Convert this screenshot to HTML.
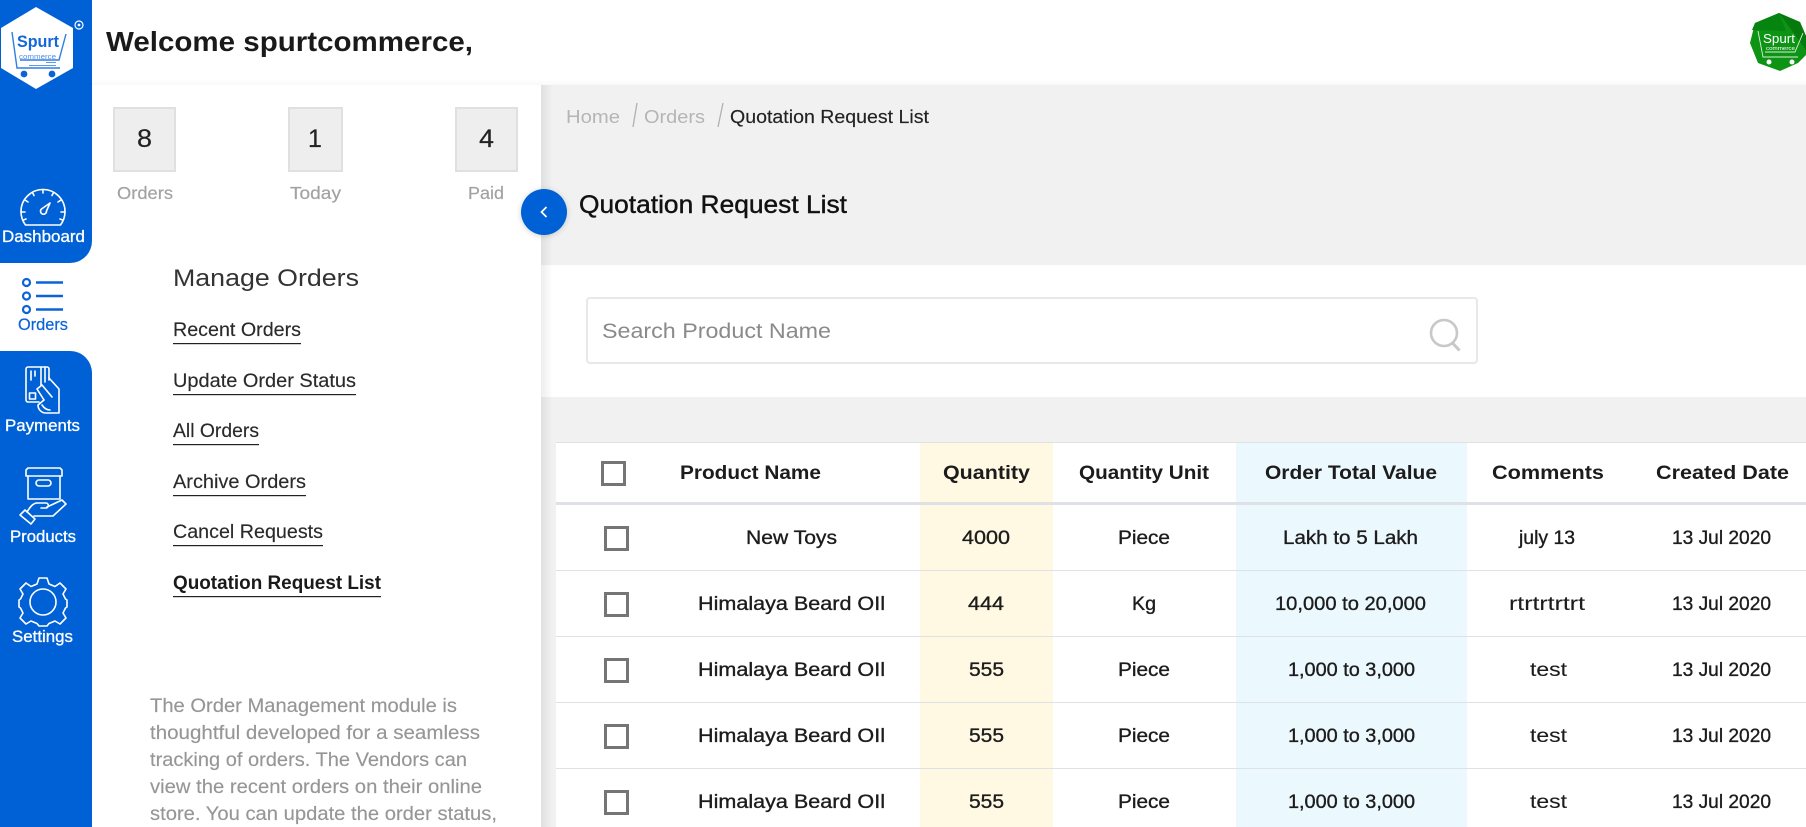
<!DOCTYPE html>
<html lang="en"><head><meta charset="utf-8"><title>Quotation Request List</title>
<style>
html,body{margin:0;padding:0;background:#fff;width:1806px;height:827px;overflow:hidden}
svg{display:block}
text{font-family:"Liberation Sans",sans-serif}
.c{fill:#1c1c1c;stroke:#1c1c1c;stroke-width:.35px;font-size:19.500px}
.h{fill:#1c1c1c;font-size:19.500px;font-weight:700}
.l{fill:#2a2a2a;font-size:19.500px;stroke:#2a2a2a;stroke-width:.15px}
.p{fill:#969696;font-size:19.500px;stroke:#969696;stroke-width:.15px}
.n{fill:#fff;font-size:16.500px;stroke:#fff;stroke-width:.3px}
.g{fill:#a2a2a2;font-size:17.500px;stroke:#a2a2a2;stroke-width:.2px}
.ic{fill:none;stroke:#fff;stroke-width:1.6;stroke-linecap:round;stroke-linejoin:round}
.cb{fill:none;stroke:#757575;stroke-width:3}
</style></head><body>
<svg width="1806" height="827" viewBox="0 0 1806 827" xmlns="http://www.w3.org/2000/svg">
<defs>
<linearGradient id="sh" x1="0" x2="1" y1="0" y2="0"><stop offset="0" stop-color="#000" stop-opacity=".07"/><stop offset="1" stop-color="#000" stop-opacity="0"/></linearGradient>
<linearGradient id="shv" x1="0" x2="0" y1="0" y2="1"><stop offset="0" stop-color="#000" stop-opacity="0"/><stop offset="1" stop-color="#000" stop-opacity=".025"/></linearGradient>
<filter id="ts" x="-30%" y="-30%" width="160%" height="160%"><feDropShadow dx="0" dy="1" stdDeviation="3" flood-color="#000" flood-opacity=".18"/></filter>
</defs>

<!-- backgrounds -->
<rect x="0" y="0" width="1806" height="827" fill="#fff"/>
<rect x="541" y="85" width="1265" height="742" fill="#f1f1f1"/>
<rect x="541" y="265" width="1265" height="132" fill="#fff"/>

<!-- header -->
<rect x="92" y="79" width="1714" height="6" fill="url(#shv)"/>
<text x="106" y="51" font-size="28" font-weight="700" fill="#1a1a1a" textLength="367" lengthAdjust="spacingAndGlyphs">Welcome spurtcommerce,</text>

<!-- avatar -->
<g>
<polygon points="1779,13 1800,22 1806,36 1806,55 1798,63 1780,71 1758,63 1750,43 1755,23" fill="#0d9415"/>
<polygon points="1779,13 1800,22 1806,36 1806,50" fill="#067a0c"/>
<polygon points="1755,23 1779,13 1786,31 1752,30" fill="#068410"/>
<text x="1763" y="43" font-size="12.500" fill="#fff" textLength="32" lengthAdjust="spacingAndGlyphs">Spurt</text>
<text x="1766" y="50" font-size="5" fill="#fff" textLength="29" lengthAdjust="spacingAndGlyphs">commerce</text>
<path d="M1758 31L1763 57H1798M1803 33L1795 52H1765" fill="none" stroke="#d8efd8" stroke-width=".9"/>
<circle cx="1769" cy="62" r="2.500" fill="#fff"/><circle cx="1792" cy="62" r="2.500" fill="#fff"/>
</g>

<!-- sidebar -->
<path d="M0 0H92V241a22 22 0 0 1-22 22H0Z" fill="#0061d6"/>
<path d="M0 351H70a22 22 0 0 1 22 22V827H0Z" fill="#0061d6"/>

<!-- logo -->
<polygon points="36,7 73,28 73,68 36,89 1,68 1,28" fill="#fff"/>
<circle cx="79" cy="25" r="4" fill="none" stroke="#fff" stroke-width="1.200"/><circle cx="79" cy="25" r="1.400" fill="#fff"/>
<path d="M12 32l5 36h43M66 34l-7 26H20" fill="none" stroke="#2f7fe2" stroke-width="1.400"/>
<text x="17" y="47" font-size="17" font-weight="700" fill="#1467d8" textLength="42" lengthAdjust="spacingAndGlyphs">Spurt</text>
<text x="19" y="59" font-size="7.500" fill="#4f8ee4" textLength="37" lengthAdjust="spacingAndGlyphs">commerce</text>
<path d="M29 65.500H56M46 62.500H56" stroke="#5f9ae9" stroke-width="1" fill="none"/>
<circle cx="24" cy="74" r="3.400" fill="#0d62d6"/><circle cx="52" cy="74" r="3.400" fill="#0d62d6"/>

<!-- dashboard -->
<g class="ic">
<path d="M25.500 225C22.500 221 21 216.500 21 211.500a22 22 0 0 1 44 0C65 216.500 63.500 221 60.500 225Z"/>
<path d="M43 189.500v3.500M32.500 192.500l1.500 3M53.500 192.500l-1.500 3M25 200l3 2M61 200l-3 2M21 212h4M61 212h4M23.500 220l2.500-1M62.500 220l-2.500-1"/>
<path d="M50 203l-3.500 8a3 3 0 1 1-5-2Z"/>
</g>
<text class="n" x="2" y="242" textLength="83" lengthAdjust="spacingAndGlyphs">Dashboard</text>

<!-- orders -->
<g fill="none" stroke="#0a63d8">
<circle cx="26.500" cy="282.500" r="3.500" stroke-width="2.200"/><circle cx="26.500" cy="296" r="3.500" stroke-width="2.200"/><circle cx="26.500" cy="309.500" r="3.500" stroke-width="2.200"/>
<path d="M36 282.500H63M36 296H63M36 309.500H63" stroke-width="2.600"/>
</g>
<text x="18" y="330" font-size="16.500" fill="#0a63d8" stroke="#0a63d8" stroke-width=".2" textLength="50" lengthAdjust="spacingAndGlyphs">Orders</text>

<!-- payments -->
<g class="ic">
<path d="M39 402H28a2 2 0 0 1-2-2V369a2 2 0 0 1 2-2H47a2 2 0 0 1 2 2V380"/>
<path d="M41 367V385M45 367V382M31 371V380M35 371V376"/>
<rect x="29.500" y="393" width="6" height="6"/>
<path d="M49 378L59 389V413H46C41 413 38 409 38 405L44 400"/>
<path d="M52 397L42 385 37 389 44 400"/>
<path d="M42 405C44 408 47 410 50 410"/>
</g>
<text class="n" x="5" y="431" textLength="75" lengthAdjust="spacingAndGlyphs">Payments</text>

<!-- products -->
<g class="ic">
<path d="M28 468H60L62 470V476H26V470Z"/>
<path d="M28 476V499H60V476"/>
<rect x="36" y="480" width="15" height="6" rx="3"/>
<path d="M20 515L25 510 35 519 31 524Z"/>
<path d="M27 512C30 507 33 503 37 503H46C49 503 49 508 46 508H41M47 507L62 500 66 504 53 516H34"/>
</g>
<text class="n" x="10" y="542" textLength="66" lengthAdjust="spacingAndGlyphs">Products</text>

<!-- settings -->
<g class="ic">
<circle cx="43" cy="602" r="13"/>
<path d="M39 578H47L49 584 55 586.500 60 583 66 589 63 594 65.500 599 67 600V607L65.500 608 63 613 66 618 60 624 55 621 49 623.500 47 626H39L37 623.500 31 621 26 624 20 618 23 613 20.500 608 19 607V600L20.500 599 23 594 20 589 26 583 31 586.500 37 584Z"/>
</g>
<text class="n" x="12" y="642" textLength="61" lengthAdjust="spacingAndGlyphs">Settings</text>

<!-- panel shadow -->
<rect x="541" y="85" width="12" height="742" fill="url(#sh)"/>

<!-- stats -->
<g fill="#eeeeee" stroke="#e0e0e0" stroke-width="2">
<rect x="114" y="108" width="61" height="63"/>
<rect x="289" y="108" width="53" height="63"/>
<rect x="456" y="108" width="61" height="63"/>
</g>
<g font-size="25" fill="#222" stroke="#222" stroke-width=".2">
<text x="137" y="147" textLength="15" lengthAdjust="spacingAndGlyphs">8</text>
<text x="308" y="147">1</text>
<text x="479" y="147" textLength="15" lengthAdjust="spacingAndGlyphs">4</text>
</g>
<text class="g" x="117" y="199" textLength="56" lengthAdjust="spacingAndGlyphs">Orders</text>
<text class="g" x="290" y="199" textLength="51" lengthAdjust="spacingAndGlyphs">Today</text>
<text class="g" x="468" y="199" textLength="36" lengthAdjust="spacingAndGlyphs">Paid</text>

<!-- menu -->
<text x="173" y="286" font-size="24.500" fill="#333" textLength="186" lengthAdjust="spacingAndGlyphs">Manage Orders</text>
<text class="l" x="173" y="336" textLength="128" lengthAdjust="spacingAndGlyphs">Recent Orders</text>
<rect x="173" y="343" width="128" height="1.200" fill="#222"/>
<text class="l" x="173" y="387" textLength="183" lengthAdjust="spacingAndGlyphs">Update Order Status</text>
<rect x="173" y="394" width="183" height="1.200" fill="#222"/>
<text class="l" x="173" y="437" textLength="86" lengthAdjust="spacingAndGlyphs">All Orders</text>
<rect x="173" y="444" width="86" height="1.200" fill="#222"/>
<text class="l" x="173" y="488" textLength="133" lengthAdjust="spacingAndGlyphs">Archive Orders</text>
<rect x="173" y="495" width="133" height="1.200" fill="#222"/>
<text class="l" x="173" y="538" textLength="150" lengthAdjust="spacingAndGlyphs">Cancel Requests</text>
<rect x="173" y="545" width="150" height="1.200" fill="#222"/>
<text x="173" y="589" font-size="19.500" font-weight="700" fill="#1a1a1a" textLength="208" lengthAdjust="spacingAndGlyphs">Quotation Request List</text>
<rect x="173" y="596" width="208" height="1.200" fill="#222"/>

<!-- description -->
<text class="p" x="150" y="712" textLength="307" lengthAdjust="spacingAndGlyphs">The Order Management module is</text>
<text class="p" x="150" y="739" textLength="330" lengthAdjust="spacingAndGlyphs">thoughtful developed for a seamless</text>
<text class="p" x="150" y="766" textLength="317" lengthAdjust="spacingAndGlyphs">tracking of orders. The Vendors can</text>
<text class="p" x="150" y="793" textLength="332" lengthAdjust="spacingAndGlyphs">view the recent orders on their online</text>
<text class="p" x="150" y="820" textLength="347" lengthAdjust="spacingAndGlyphs">store. You can update the order status,</text>

<!-- toggle -->
<circle cx="544" cy="212" r="23" fill="#0061d6" filter="url(#ts)"/>
<path d="M546.500 207L541.500 212 546.500 217" fill="none" stroke="#fff" stroke-width="1.700"/>

<!-- breadcrumb -->
<text x="566" y="123" font-size="18.500" fill="#b5b5b5" textLength="54" lengthAdjust="spacingAndGlyphs">Home</text>
<path d="M637 103L633 127M723 103L718 127" stroke="#b0b0b0" stroke-width="1.300" fill="none"/>
<text x="644" y="123" font-size="18.500" fill="#b5b5b5" textLength="61" lengthAdjust="spacingAndGlyphs">Orders</text>
<text x="730" y="123" font-size="18.500" fill="#222" stroke="#222" stroke-width=".15" textLength="199" lengthAdjust="spacingAndGlyphs">Quotation Request List</text>
<text x="579" y="213" font-size="25" fill="#111" stroke="#111" stroke-width=".4" textLength="268" lengthAdjust="spacingAndGlyphs">Quotation Request List</text>

<!-- search -->
<rect x="587" y="298" width="890" height="65" rx="3" fill="#fff" stroke="#e8e8e8" stroke-width="2"/>
<text x="602" y="338" font-size="21" fill="#8a8a8a" textLength="229" lengthAdjust="spacingAndGlyphs">Search Product Name</text>
<circle cx="1444" cy="333" r="13" fill="none" stroke="#c8c8c8" stroke-width="2.600"/>
<path d="M1452.500 343L1459.500 350.500" stroke="#c8c8c8" stroke-width="3" fill="none"/>

<!-- table -->
<rect x="556" y="442" width="1250" height="385" fill="#fff"/>
<rect x="920" y="442" width="133" height="385" fill="#fff8e3"/>
<rect x="1236" y="442" width="231" height="385" fill="#ebf8fe"/>
<rect x="556" y="442" width="1250" height="1" fill="#dee2e6"/>
<rect x="556" y="502" width="1250" height="3" fill="#dee2e6"/>
<rect x="556" y="570" width="1250" height="1" fill="#dee2e6"/>
<rect x="556" y="636" width="1250" height="1" fill="#dee2e6"/>
<rect x="556" y="702" width="1250" height="1" fill="#dee2e6"/>
<rect x="556" y="768" width="1250" height="1" fill="#dee2e6"/>

<rect class="cb" x="602.500" y="462.500" width="22" height="22"/>
<text class="h" x="680" y="479" textLength="141" lengthAdjust="spacingAndGlyphs">Product Name</text>
<text class="h" x="943" y="479" textLength="87" lengthAdjust="spacingAndGlyphs">Quantity</text>
<text class="h" x="1079" y="479" textLength="130" lengthAdjust="spacingAndGlyphs">Quantity Unit</text>
<text class="h" x="1265" y="479" textLength="172" lengthAdjust="spacingAndGlyphs">Order Total Value</text>
<text class="h" x="1492" y="479" textLength="112" lengthAdjust="spacingAndGlyphs">Comments</text>
<text class="h" x="1656" y="479" textLength="133" lengthAdjust="spacingAndGlyphs">Created Date</text>

<!-- rows -->
<rect class="cb" x="605.500" y="527.500" width="22" height="22"/>
<text class="c" x="746" y="544" textLength="91" lengthAdjust="spacingAndGlyphs">New Toys</text>
<text class="c" x="962" y="544" textLength="48" lengthAdjust="spacingAndGlyphs">4000</text>
<text class="c" x="1118" y="544" textLength="52" lengthAdjust="spacingAndGlyphs">Piece</text>
<text class="c" x="1283" y="544" textLength="135" lengthAdjust="spacingAndGlyphs">Lakh to 5 Lakh</text>
<text class="c" x="1519" y="544" textLength="56" lengthAdjust="spacingAndGlyphs">july 13</text>
<text class="c" x="1672" y="544" textLength="99" lengthAdjust="spacingAndGlyphs">13 Jul 2020</text>

<rect class="cb" x="605.500" y="593.500" width="22" height="22"/>
<text class="c" x="698" y="610" textLength="187" lengthAdjust="spacingAndGlyphs">Himalaya Beard OIl</text>
<text class="c" x="968" y="610" textLength="36" lengthAdjust="spacingAndGlyphs">444</text>
<text class="c" x="1132" y="610" textLength="24" lengthAdjust="spacingAndGlyphs">Kg</text>
<text class="c" x="1275" y="610" textLength="151" lengthAdjust="spacingAndGlyphs">10,000 to 20,000</text>
<text class="c" x="1509" y="610" textLength="76" font-size="18" style="stroke-width:.1px" lengthAdjust="spacingAndGlyphs">rtrtrtrtrt</text>
<text class="c" x="1672" y="610" textLength="99" lengthAdjust="spacingAndGlyphs">13 Jul 2020</text>

<rect class="cb" x="605.500" y="659.500" width="22" height="22"/>
<text class="c" x="698" y="676" textLength="187" lengthAdjust="spacingAndGlyphs">Himalaya Beard OIl</text>
<text class="c" x="969" y="676" textLength="35" lengthAdjust="spacingAndGlyphs">555</text>
<text class="c" x="1118" y="676" textLength="52" lengthAdjust="spacingAndGlyphs">Piece</text>
<text class="c" x="1288" y="676" textLength="127" lengthAdjust="spacingAndGlyphs">1,000 to 3,000</text>
<text class="c" x="1530" y="676" textLength="37" style="stroke-width:.1px" lengthAdjust="spacingAndGlyphs">test</text>
<text class="c" x="1672" y="676" textLength="99" lengthAdjust="spacingAndGlyphs">13 Jul 2020</text>

<rect class="cb" x="605.500" y="725.500" width="22" height="22"/>
<text class="c" x="698" y="742" textLength="187" lengthAdjust="spacingAndGlyphs">Himalaya Beard OIl</text>
<text class="c" x="969" y="742" textLength="35" lengthAdjust="spacingAndGlyphs">555</text>
<text class="c" x="1118" y="742" textLength="52" lengthAdjust="spacingAndGlyphs">Piece</text>
<text class="c" x="1288" y="742" textLength="127" lengthAdjust="spacingAndGlyphs">1,000 to 3,000</text>
<text class="c" x="1530" y="742" textLength="37" style="stroke-width:.1px" lengthAdjust="spacingAndGlyphs">test</text>
<text class="c" x="1672" y="742" textLength="99" lengthAdjust="spacingAndGlyphs">13 Jul 2020</text>

<rect class="cb" x="605.500" y="791.500" width="22" height="22"/>
<text class="c" x="698" y="808" textLength="187" lengthAdjust="spacingAndGlyphs">Himalaya Beard OIl</text>
<text class="c" x="969" y="808" textLength="35" lengthAdjust="spacingAndGlyphs">555</text>
<text class="c" x="1118" y="808" textLength="52" lengthAdjust="spacingAndGlyphs">Piece</text>
<text class="c" x="1288" y="808" textLength="127" lengthAdjust="spacingAndGlyphs">1,000 to 3,000</text>
<text class="c" x="1530" y="808" textLength="37" style="stroke-width:.1px" lengthAdjust="spacingAndGlyphs">test</text>
<text class="c" x="1672" y="808" textLength="99" lengthAdjust="spacingAndGlyphs">13 Jul 2020</text>
</svg>
</body></html>
